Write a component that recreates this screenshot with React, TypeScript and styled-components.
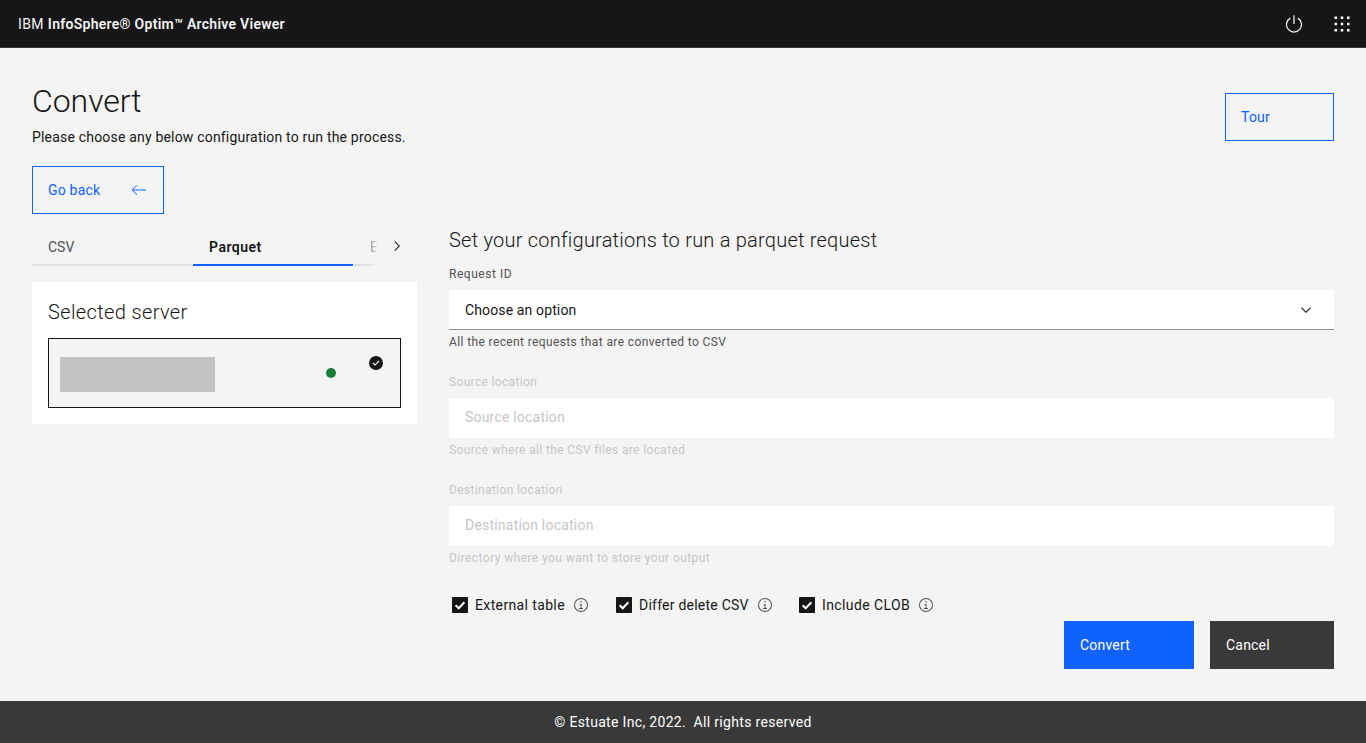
import React from "react";
import styled, { createGlobalStyle } from "styled-components";

const GlobalStyle = createGlobalStyle`
  *, *::before, *::after { box-sizing: border-box; }
  body {
    margin: 0;
    background: #f4f4f4;
    color: #161616;
    font-family: Roboto, "Liberation Sans", sans-serif;
    font-size: 14px;
    line-height: 18px;
  }
  h1, h2, p { margin: 0; }
  button { font: inherit; border-radius: 0; }
`;

const Page = styled.div`
  display: flex;
  flex-direction: column;
  height: 743px;
  overflow: hidden;
`;

const Header = styled.header`
  display: flex;
  align-items: center;
  justify-content: space-between;
  height: 48px;
  padding: 0 14px 0 18px;
  background: #161616;
  border-bottom: 1px solid #393939;
  color: #f4f4f4;
`;

const Brand = styled.div`
  white-space: pre;
  letter-spacing: 0.4px;
  font-weight: 400;
  b {
    font-weight: 600;
    letter-spacing: 0.28px;
  }
`;

const HeaderActions = styled.div`
  display: flex;
  gap: 28px;
  svg { display: block; }
`;

const Main = styled.main`
  display: flex;
  flex-direction: column;
  flex: 1;
  padding: 34px 32px 0;
`;

const Intro = styled.section`
  display: flex;
  justify-content: space-between;
  align-items: flex-start;
  height: 84px;
`;

const Title = styled.h1`
  font-size: 32px;
  line-height: 38px;
  font-weight: 300;
  letter-spacing: -0.05px;
`;

const Subtitle = styled.p`
  margin-top: 8px;
  letter-spacing: 0.19px;
`;

const Button = styled.button<{ $kind: "outline" | "primary" | "secondary"; $width: number }>`
  display: flex;
  align-items: center;
  justify-content: space-between;
  width: ${(p) => p.$width}px;
  height: 48px;
  padding: 0 16px 0 15px;
  border: 1px solid;
  letter-spacing: 0.2px;
  color: ${(p) => (p.$kind === "outline" ? "#0f62fe" : "#fff")};
  border-color: ${(p) => (p.$kind === "secondary" ? "#393939" : "#0f62fe")};
  background: ${(p) =>
    p.$kind === "outline" ? "transparent" : p.$kind === "primary" ? "#0f62fe" : "#393939"};
`;

const TourSlot = styled.div`
  padding-top: 11px;
`;

const Columns = styled.div`
  display: grid;
  grid-template-columns: 385px 885px;
  column-gap: 32px;
`;

const Side = styled.aside`
  padding-top: 14px;
`;

const TabBar = styled.div`
  display: flex;
  gap: 1px;
  height: 38px;
`;

const Tab = styled.div<{ $active?: boolean }>`
  width: 160px;
  padding: 10px 16px 0;
  border-bottom: 2px solid ${(p) => (p.$active ? "#0f62fe" : "#e0e0e0")};
  color: ${(p) => (p.$active ? "#161616" : "#525252")};
  font-weight: ${(p) => (p.$active ? 600 : 400)};
  letter-spacing: ${(p) => (p.$active ? 0.5 : 0)}px;
`;

const FadingTab = styled(Tab)`
  width: 24px;
  padding-right: 0;
  mask-image: linear-gradient(to right, #000 50%, transparent 100%);
`;

const TabScroll = styled.div`
  display: flex;
  padding: 10px 0 0 10px;
`;

const ServerCard = styled.section`
  height: 142px;
  margin-top: 16px;
  padding: 18px 16px 16px;
  background: #fff;
`;

const SectionTitle = styled.h2<{ $spacing: number }>`
  font-size: 20px;
  line-height: 24px;
  font-weight: 300;
  letter-spacing: ${(p) => p.$spacing}px;
`;

const ServerTile = styled.div`
  display: flex;
  height: 70px;
  margin-top: 14px;
  padding: 16px 16px 0 11px;
  background: #f4f4f4;
  border: 1px solid #161616;
`;

const ServerName = styled.div`
  width: 155px;
  height: 35px;
  margin-top: 2px;
  background: #c3c3c3;
`;

const StatusDot = styled.span`
  width: 10px;
  height: 10px;
  margin: 13px 32px 0 111px;
  border-radius: 50%;
  background: #198038;
`;

const Form = styled.section`
  padding-top: 14px;
`;

const Field = styled.div<{ $disabled?: boolean }>`
  display: flex;
  flex-direction: column;
  color: ${(p) => (p.$disabled ? "#c6c6c6" : "#161616")};
`;

const FieldGroup = styled.div`
  display: flex;
  flex-direction: column;
  gap: 24px;
  margin-top: 14px;
`;

const Caption = styled.div<{ $muted?: boolean; $spacing: number }>`
  font-size: 12px;
  line-height: 16px;
  letter-spacing: ${(p) => p.$spacing}px;
  color: ${(p) => (p.$muted ? "#c6c6c6" : "#525252")};
`;

const Control = styled.div<{ $underline?: boolean; $spacing: number }>`
  display: flex;
  align-items: center;
  justify-content: space-between;
  height: 40px;
  margin: 8px 0 4px;
  padding: ${(p) => (p.$underline ? "1px 20px 0 16px" : "0 20px 1px 16px")};
  background: #fff;
  border-bottom: 1px solid ${(p) => (p.$underline ? "#8d8d8d" : "#fff")};
  letter-spacing: ${(p) => p.$spacing}px;
`;

const Options = styled.div`
  display: flex;
  height: 16px;
  margin: 31px 0 8px 3px;
`;

const Option = styled.div<{ $width: number }>`
  display: flex;
  align-items: center;
  width: ${(p) => p.$width}px;
  white-space: nowrap;
  svg { flex: none; }
`;

const OptionLabel = styled.span<{ $spacing: number }>`
  margin: 0 8px 0 7px;
  letter-spacing: ${(p) => p.$spacing}px;
`;

const Actions = styled.div`
  display: flex;
  justify-content: flex-end;
  gap: 16px;
`;

const Footer = styled.footer`
  display: flex;
  align-items: center;
  justify-content: center;
  height: 42px;
  background: #393939;
  color: #fff;
  white-space: pre;
  letter-spacing: 0.32px;
`;

const PowerIcon = () => (
  <svg width="20" height="20" viewBox="0 0 32 32" fill="#f4f4f4">
    <path d="M22.5 5.74l-1 1.73a11 11 0 1 1-11 0l-1-1.73a13 13 0 1 0 13 0Z" />
    <path d="M15 2h2v14h-2z" />
  </svg>
);

const SwitcherIcon = () => (
  <svg width="20" height="20" viewBox="0 0 32 32" fill="#fff">
    {[4, 14, 24].map((y) =>
      [4, 14, 24].map((x) => <rect key={`${x}-${y}`} x={x} y={y} width="4" height="4" />)
    )}
  </svg>
);

const ArrowLeftIcon = () => (
  <svg width="16" height="16" viewBox="0 0 16 16" fill="none" stroke="#0f62fe">
    <path d="M6 3.2L1.2 8L6 12.8M1.2 8H15" />
  </svg>
);

const ChevronRightIcon = () => (
  <svg width="16" height="16" viewBox="0 0 16 16" fill="#161616">
    <path d="M11 8L6 13L5.3 12.3L9.6 8L5.3 3.7L6 3Z" />
  </svg>
);

const ChevronDownIcon = () => (
  <svg width="16" height="16" viewBox="0 0 16 16" fill="#161616">
    <path d="M8 11L3 6L3.7 5.3L8 9.6L12.3 5.3L13 6Z" />
  </svg>
);

const CheckFilledIcon = () => (
  <svg width="16" height="16" viewBox="0 0 16 16">
    <circle cx="8" cy="8" r="7" fill="#161616" />
    <path d="M7 10.8L4.5 8.3L5.3 7.5L7 9.2L10.7 5.5L11.5 6.3Z" fill="#fff" />
  </svg>
);

const CheckboxIcon = () => (
  <svg width="16" height="16" viewBox="0 0 16 16">
    <rect width="16" height="16" rx="0.8" fill="#161616" />
    <path d="M3.6 8.3L6.7 11.3L12.4 5.3" fill="none" stroke="#fff" strokeWidth="2" />
  </svg>
);

const InfoIcon = () => (
  <svg width="16" height="16" viewBox="0 0 32 32" fill="#525252">
    <path d="M17 22v-8h-4v2h2v6h-3v2h8v-2ZM16 8a1.5 1.5 0 1 0 1.5 1.5A1.5 1.5 0 0 0 16 8Z" />
    <path d="M16 30a14 14 0 1 1 14-14 14 14 0 0 1-14 14Zm0-26a12 12 0 1 0 12 12A12 12 0 0 0 16 4Z" />
  </svg>
);

const options = [
  { label: "External table", width: 164, spacing: 0.37 },
  { label: "Differ delete CSV", width: 183, spacing: 0.23 },
  { label: "Include CLOB", width: 150, spacing: 0.4 },
];

export default function App() {
  return (
    <>
      <GlobalStyle />
      <Page>
        <Header>
          <Brand>
            IBM <b>InfoSphere® Optim™ Archive Viewer</b>
          </Brand>
          <HeaderActions>
            <PowerIcon />
            <SwitcherIcon />
          </HeaderActions>
        </Header>
        <Main>
          <Intro>
            <div>
              <Title>Convert</Title>
              <Subtitle>Please choose any below configuration to run the process.</Subtitle>
            </div>
            <TourSlot>
              <Button $kind="outline" $width={109}>Tour</Button>
            </TourSlot>
          </Intro>
          <Button $kind="outline" $width={132}>
            Go back
            <ArrowLeftIcon />
          </Button>
          <Columns>
            <Side>
              <TabBar>
                <Tab>CSV</Tab>
                <Tab $active>Parquet</Tab>
                <FadingTab>E</FadingTab>
                <TabScroll>
                  <ChevronRightIcon />
                </TabScroll>
              </TabBar>
              <ServerCard>
                <SectionTitle $spacing={0.37}>Selected server</SectionTitle>
                <ServerTile>
                  <ServerName />
                  <StatusDot />
                  <CheckFilledIcon />
                </ServerTile>
              </ServerCard>
            </Side>
            <Form>
              <SectionTitle $spacing={0.23}>Set your configurations to run a parquet request</SectionTitle>
              <FieldGroup>
                <Field>
                  <Caption $spacing={0.54}>Request ID</Caption>
                  <Control $underline $spacing={0.13}>
                    Choose an option
                    <ChevronDownIcon />
                  </Control>
                  <Caption $spacing={0.38}>All the recent requests that are converted to CSV</Caption>
                </Field>
                <Field $disabled>
                  <Caption $muted $spacing={0.34}>Source location</Caption>
                  <Control $spacing={0.2}>Source location</Control>
                  <Caption $muted $spacing={0.36}>Source where all the CSV files are located</Caption>
                </Field>
                <Field $disabled>
                  <Caption $muted $spacing={0.36}>Destination location</Caption>
                  <Control $spacing={0.21}>Destination location</Control>
                  <Caption $muted $spacing={0.43}>Directory where you want to store your output</Caption>
                </Field>
              </FieldGroup>
              <Options>
                {options.map((o) => (
                  <Option key={o.label} $width={o.width}>
                    <CheckboxIcon />
                    <OptionLabel $spacing={o.spacing}>{o.label}</OptionLabel>
                    <InfoIcon />
                  </Option>
                ))}
              </Options>
              <Actions>
                <Button $kind="primary" $width={130}>Convert</Button>
                <Button $kind="secondary" $width={124}>Cancel</Button>
              </Actions>
            </Form>
          </Columns>
        </Main>
        <Footer>{"© Estuate Inc, 2022.  All rights reserved"}</Footer>
      </Page>
    </>
  );
}
